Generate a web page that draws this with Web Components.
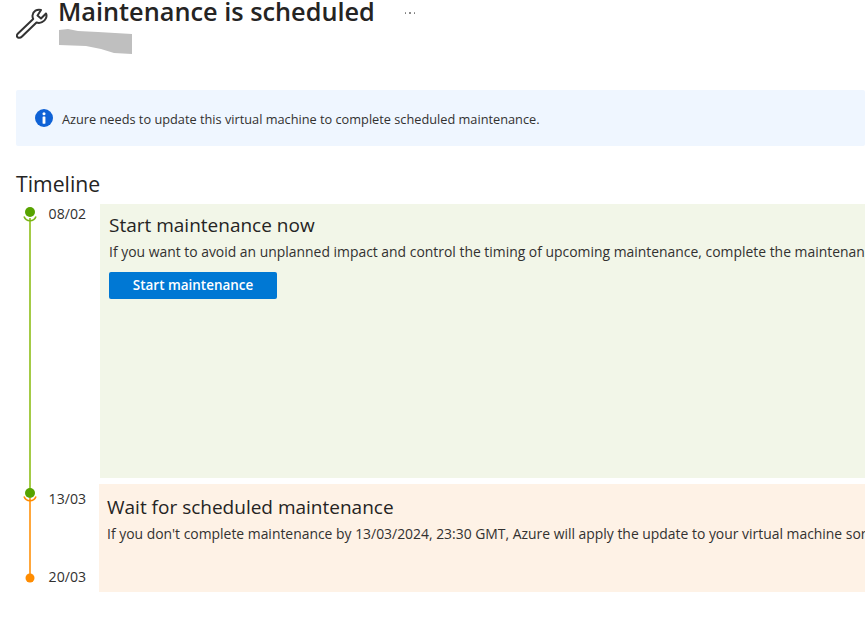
<!DOCTYPE html>
<html><head><meta charset="utf-8"><style>
html,body{margin:0;padding:0;background:#fff;overflow:hidden;height:625px}
body{font-family:"Open Sans","Noto Sans",sans-serif;color:#252423}
</style></head><body>
<maint-page></maint-page>
<script>
function def(name,html){customElements.define(name,class extends HTMLElement{constructor(){super();this.attachShadow({mode:'open'}).innerHTML=html}})}
def('page-header',`<style>
:host{display:flex;height:90px;box-sizing:border-box;overflow:hidden}
.ic{margin:7px 9px 0 -1px;flex:none}
.t{display:flex;flex-direction:column}
h1{margin:0;font-size:25.3px;line-height:23px;font-weight:600;color:#252423;white-space:nowrap}
.r{display:block;margin-top:6px}
.more{margin:12px 0 0 30px;display:flex;gap:3px}
.more i{width:1.5px;height:1.5px;background:#777;border-radius:50%}
</style>
<svg class="ic" width="34" height="32" viewBox="0 0 34 32" fill="none" stroke="#333" stroke-width="2" stroke-linejoin="round" stroke-linecap="round"><path d="M26 3C22 2 18 4 17.5 8.5C17.4 10 17.7 11 18.2 12L3 26.5C1 28.5 2 30 3 30.5C4.5 31.3 6 30.5 7 29.5L21.5 15.5C23 16 25 16.2 27 15.2C30.5 13.5 32.5 9.5 31 6.5L26 11.5L22.5 8.5Z"/></svg>
<div class="t"><h1><slot></slot></h1>
<svg class="r" width="75" height="26" viewBox="0 0 75 26"><path fill="#bfbfbf" d="M1 1L10 0L20 2L40 3L74 5V25L56 24L43 20L28 17L1 16Z"/></svg></div>
<div class="more"><i></i><i></i><i></i></div>`);
def('info-banner',`<style>
:host{display:flex;align-items:center;gap:9px;height:56px;background:#eff6ff;padding-left:19px;font-size:12.75px;border-radius:2px;color:#323130}
svg{flex:none}
span{position:relative;top:.5px}
</style>
<svg width="18" height="18" viewBox="0 0 19 19"><circle cx="9.5" cy="9.5" r="9.5" fill="#0f62d6"/><circle cx="9.5" cy="5" r="1.6" fill="#fff"/><rect x="8" y="8" width="3" height="7.5" rx=".5" fill="#fff"/></svg>
<span><slot></slot></span>`);
def('section-title',`<style>
:host{display:block;font-size:21.2px;line-height:28px;margin:24px 0 6px;color:#252423}
</style><slot></slot>`);
def('time-step',`<style>
:host{display:grid;grid-template-columns:var(--rail,84px) 1fr;min-height:0;height:var(--h)}
.rail{display:flex;min-width:0}
.track{width:28px;flex:none;display:flex}
.dates{flex:1;display:flex;flex-direction:column;align-items:flex-end;justify-content:space-between;padding:var(--dp,0 14px 0 0);font-size:14.1px;line-height:20px;color:#323130}
</style>
<div class="rail"><div class="track"><slot name="track"></slot></div><div class="dates"><slot name="date"></slot></div></div>
<div><slot></slot></div>`);
def('step-card',`<style>
:host{display:block;background:var(--bg);height:var(--ch);box-sizing:border-box;padding:var(--pad);overflow:hidden;white-space:nowrap}
h3{margin:0;font-weight:400;font-size:19px;line-height:24px;color:#252423}
p{margin:5px 0 0;font-size:13.92px;line-height:20px;color:#323130}
::slotted(step-button){margin-top:10px}
</style><h3><slot name="title"></slot></h3><p><slot name="text"></slot></p><slot></slot>`);
def('step-button',`<style>
:host{display:flex;align-items:center;justify-content:center;width:168px;height:27px;padding-bottom:2px;box-sizing:border-box;background:#0078d4;color:#fff;border-radius:2px;font-size:13.45px;font-weight:600}
</style><slot></slot>`);
def('rail-one',`<style>:host{display:block;width:28px;height:100%}svg{display:block;width:28px;height:100%}</style>
<svg preserveAspectRatio="none" viewBox="0 0 28 280" fill="none"><path d="M14 14V280" stroke="#a4cb46" stroke-width="2"/><path d="M8 12.5A6.4 6.4 0 0 0 20 12.5" stroke="#7cb518" stroke-width="1.6"/><circle cx="14" cy="8" r="5" fill="#57a300"/></svg>`);
def('rail-two',`<style>:host{display:block;width:28px;height:100%}svg{display:block;width:28px;height:100%}</style>
<svg preserveAspectRatio="none" viewBox="0 0 28 108" fill="none"><path d="M14 0V6" stroke="#a4cb46" stroke-width="2"/><path d="M14 14V94" stroke="#ffa73c" stroke-width="2"/><path d="M8 12.5A6.4 6.4 0 0 0 20 12.5" stroke="#ff8c00" stroke-width="1.6"/><circle cx="14" cy="9" r="5" fill="#57a300"/><circle cx="14" cy="94" r="4.5" fill="#ff8c00"/></svg>`);
def('maint-page',`<style>
:host{display:block;padding-left:16px;width:849px;height:625px;overflow:hidden;box-sizing:content-box}
</style>
<page-header>Maintenance is scheduled</page-header>
<info-banner>Azure needs to update this virtual machine to complete scheduled maintenance.</info-banner>
<section-title>Timeline</section-title>
<time-step style="--rail:84px;--h:280px;--dp:0 14px 0 0">
 <rail-one slot="track"></rail-one>
 <span slot="date">08/02</span><span slot="date"></span>
 <step-card style="--bg:#f2f6e8;--ch:274px;--pad:9px 9px">
  <span slot="title">Start maintenance now</span>
  <span slot="text">If you want to avoid an unplanned impact and control the timing of upcoming maintenance, complete the maintenan</span>
  <step-button>Start maintenance</step-button>
 </step-card>
</time-step>
<time-step style="--rail:83px;--h:108px;--dp:5px 13px 5px 0">
 <rail-two slot="track"></rail-two>
 <span slot="date">13/03</span><span slot="date">20/03</span>
 <step-card style="--bg:#fef2e6;--ch:108px;--pad:11px 8px">
  <span slot="title">Wait for scheduled maintenance</span>
  <span slot="text">If you don't complete maintenance by 13/03/2024, 23:30 GMT, Azure will apply the update to your virtual machine sor</span>
 </step-card>
</time-step>`);
</script></body></html>
